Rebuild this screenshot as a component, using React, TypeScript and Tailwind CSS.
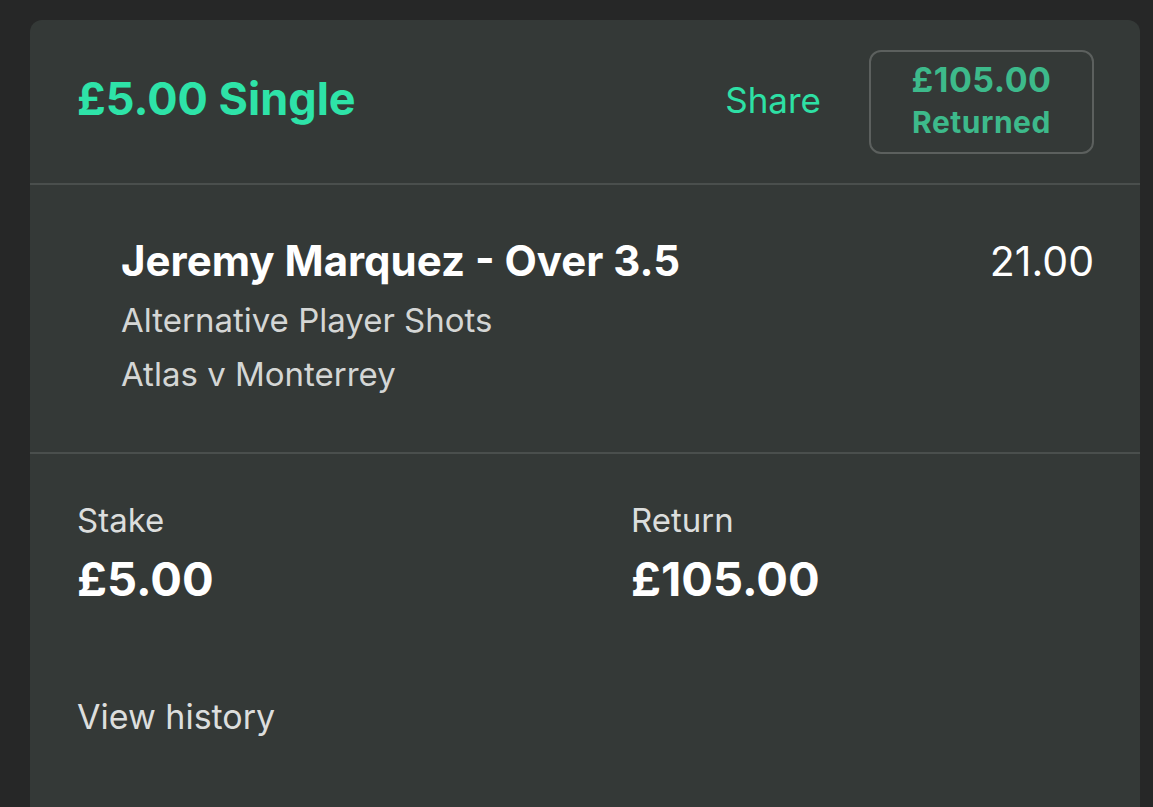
import React from "react";

export default function App() {
  return (
    <div
      className="w-[1153px] h-[807px] overflow-hidden bg-[#262727] pt-[20px] pl-[30px]"
      style={{ fontFamily: "Inter, 'Noto Sans', sans-serif" }}
    >
      <div className="w-[1110px] h-[800px] rounded-t-[12px] bg-[#343937]">
        {/* Header */}
        <div className="h-[165px] flex items-center pl-[47px] pr-[46px] border-b-2 border-[#4a4f4d]">
          <div className="mb-[6px] text-[45px] font-bold text-[#2ee3a8] leading-none">£5.00 Single</div>
          <div className="ml-auto mb-[3px] text-[35px] text-[#2ee0a5] leading-none">Share</div>
          <div className="ml-[48px] w-[225px] h-[104px] rounded-[12px] border-2 border-[#5c605e] flex flex-col items-center pt-[8px]">
            <div className="text-[34px] font-bold text-[#3dba8b] leading-[40px] tracking-[0.5px]">£105.00</div>
            <div className="mt-[4px] text-[30px] font-bold text-[#3dba8b] leading-[36px] tracking-[0.5px]">Returned</div>
          </div>
        </div>
        {/* Selection */}
        <div className="h-[269px] border-b-2 border-[#4a4f4d] pl-[91px] pr-[46px] pt-[51px]">
          <div className="flex items-baseline">
            <div className="text-[42px] font-bold text-white leading-[50px]">Jeremy Marquez - Over 3.5</div>
            <div className="ml-auto text-[41px] text-white leading-[50px]">21.00</div>
          </div>
          <div className="mt-[14px] text-[33px] text-[#d4d6d5] leading-[40px]">Alternative Player Shots</div>
          <div className="mt-[14px] text-[33px] text-[#d4d6d5] leading-[40px]">Atlas v Monterrey</div>
        </div>
        {/* Stake / Return */}
        <div className="pl-[47px] pt-[46px]">
          <div className="flex">
            <div className="w-[554px]">
              <div className="text-[33px] text-[#dcdedd] leading-[40px]">Stake</div>
              <div className="mt-[11px] text-[47px] font-bold text-white leading-[56px]">£5.00</div>
            </div>
            <div>
              <div className="text-[33px] text-[#dcdedd] leading-[40px]">Return</div>
              <div className="mt-[11px] text-[47px] font-bold text-white leading-[56px]">£105.00</div>
            </div>
          </div>
          <div className="mt-[90px] text-[34px] text-[#dcdedd] leading-[40px]">View history</div>
        </div>
      </div>
    </div>
  );
}
